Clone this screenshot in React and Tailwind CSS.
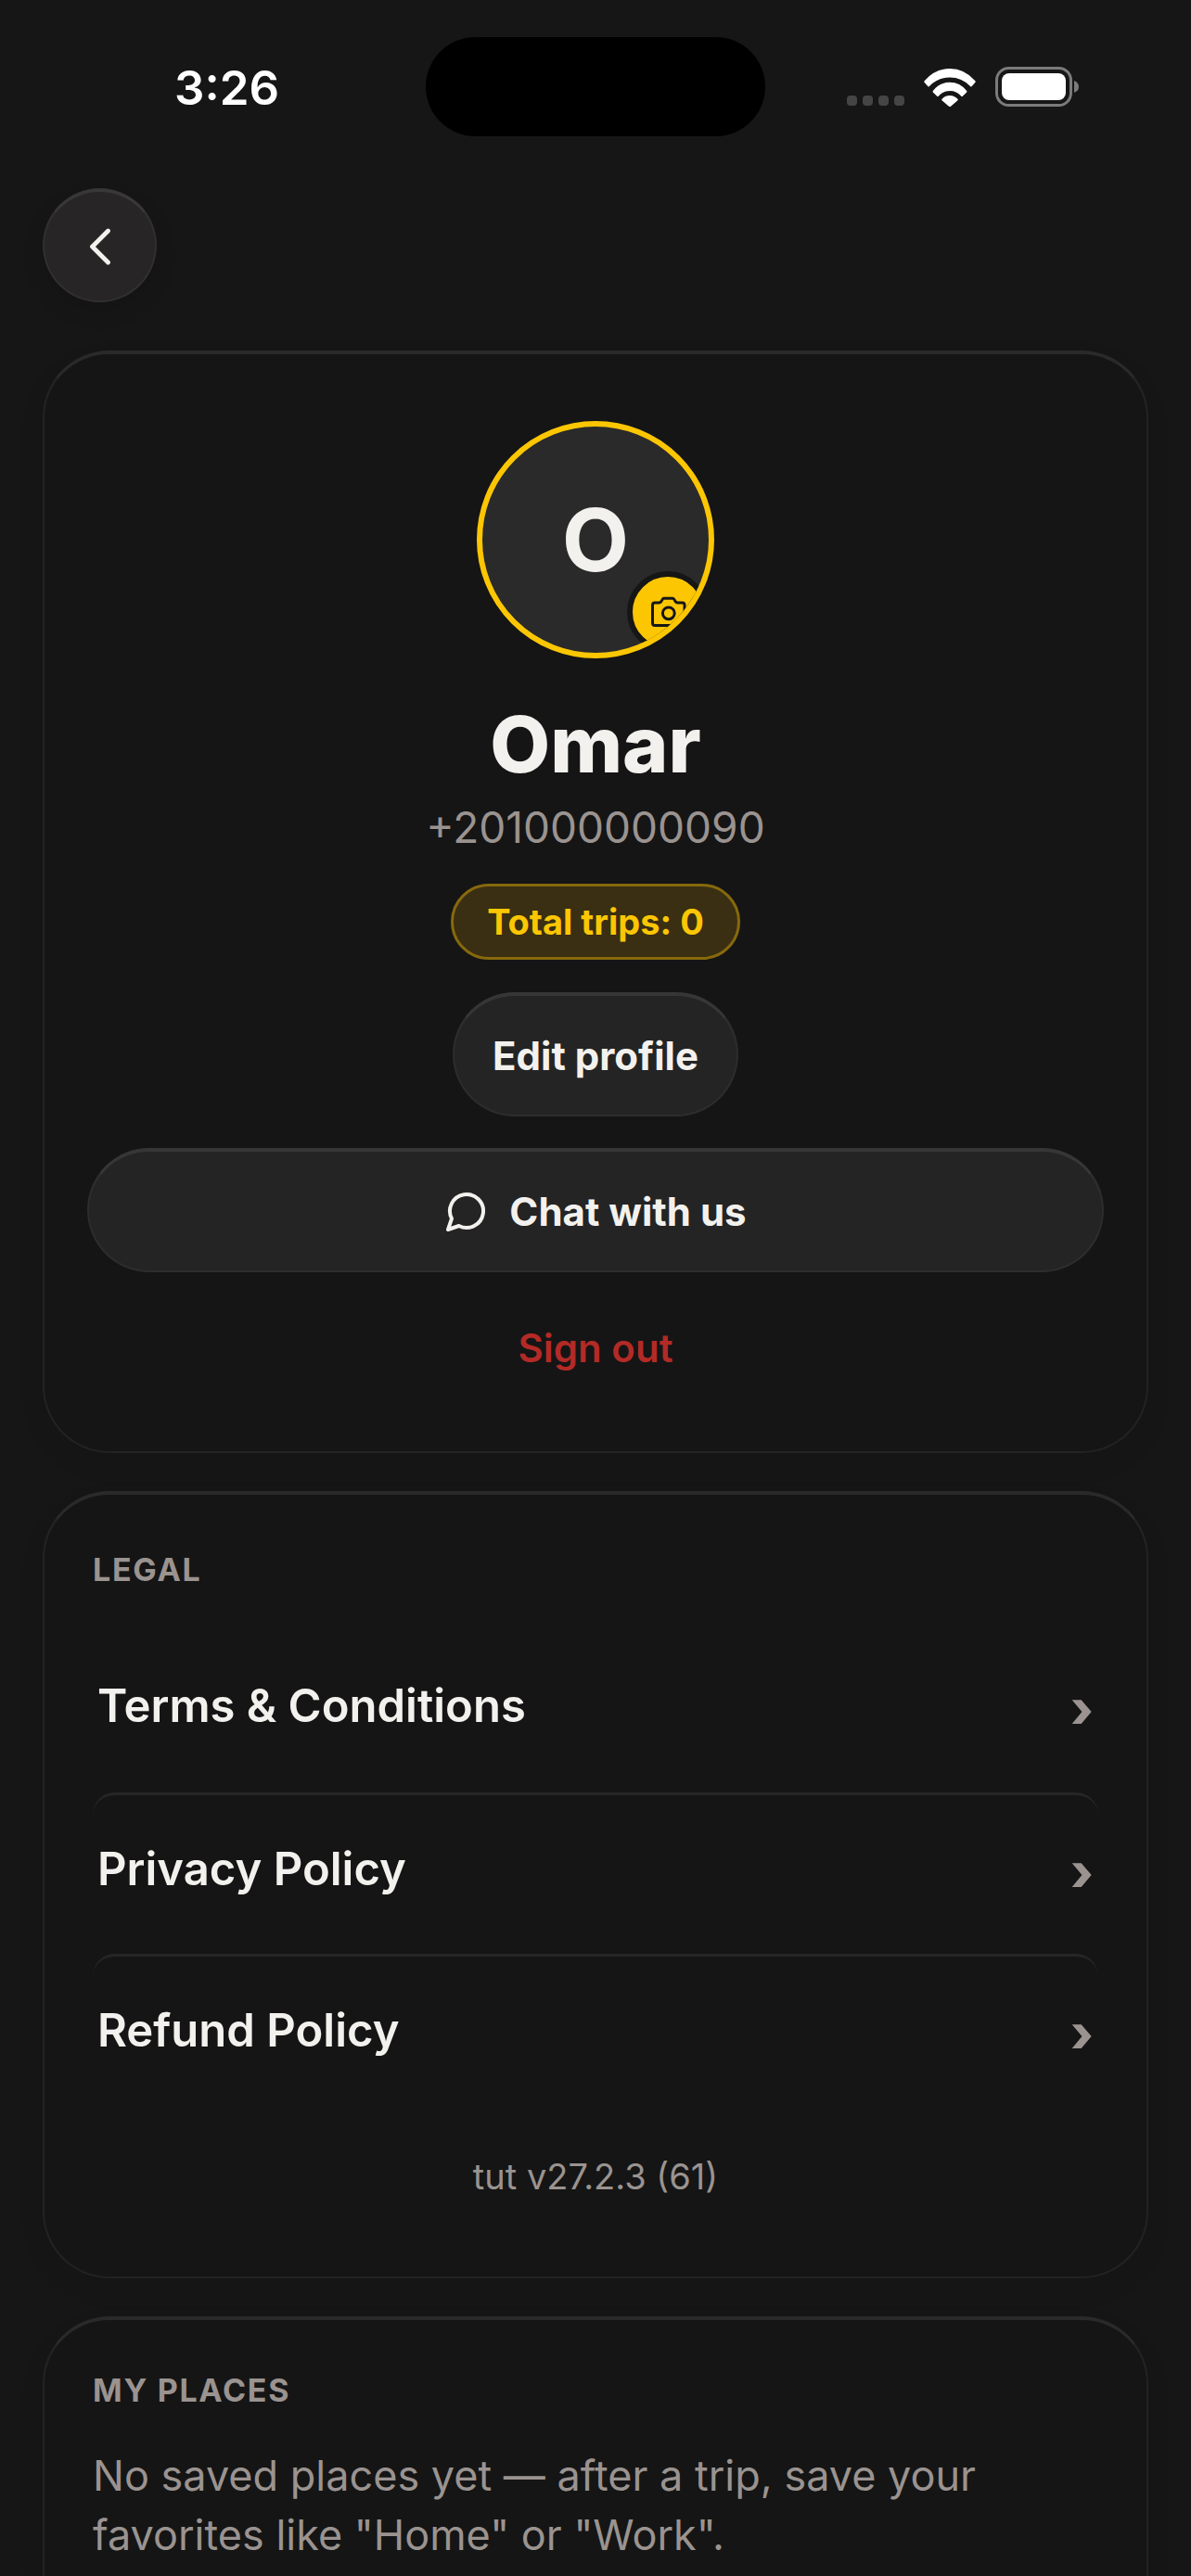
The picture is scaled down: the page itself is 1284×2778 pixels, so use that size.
import React from 'react';

const legalLinks = ['Terms & Conditions', 'Privacy Policy', 'Refund Policy'];

const cardClass = "border-2 border-t-4 border-[#232323] border-t-[#2a2a2a] bg-[#151515] shadow-[0_12px_32px_rgba(0,0,0,0.05)]";
const pillButton = "flex items-center justify-center h-[134px] rounded-full border-2 border-t-4 border-[#2d2d2d] border-t-[#363636] bg-[#242424] text-[42px] font-bold";
const sectionTitle = "text-[34px] leading-[40px] font-bold tracking-wider text-[#9a9390]";

const WifiIcon = () => (
    <svg width="56" height="42" viewBox="0 0 56 42" fill="white" aria-hidden="true">
        <path d="M0.500 15.800Q0 15 .6 14.200Q12 1 28 1T55.400 14.200Q56 15 55.500 15.800L51.500 20.300Q51 20.900 50.300 20.200Q41 10.500 28 10.500T5.700 20.200Q5 20.900 4.500 20.300Z" />
        <path d="M9.800 25Q17 15.800 28 15.800T46.200 25Q46.600 25.800 46.200 26.400L41.500 31Q41 31.400 40.300 30.800Q35.500 25 28 25T15.700 30.800Q15 31.400 14.500 31L9.800 26.400Q9.400 25.800 9.800 25Z" />
        <path d="M19.500 33.800Q23 30 28 30T36.500 33.800Q37 34.600 36.500 35.200L29 41.700Q28 42.400 27 41.700L19.500 35.200Q19 34.600 19.500 33.800Z" />
    </svg>
);

const BatteryIcon = () => (
    <svg width="91" height="44" viewBox="0 0 91 44" aria-hidden="true">
        <rect x="1.500" y="1.500" width="80" height="40" rx="13" fill="none" stroke="#7b7b7b" strokeWidth="3" />
        <rect x="7" y="7" width="69" height="29" rx="8" fill="white" />
        <path d="M85 15Q90 17 90 21.500T85 28Z" fill="#7b7b7b" />
    </svg>
);

const CameraIcon = () => (
    <svg width="44" height="44" viewBox="0 0 44 44" fill="none" stroke="#161616" strokeWidth="3" strokeLinejoin="round" aria-hidden="true">
        <path d="M8 36.500Q5.500 36.500 5.500 34V14.500Q5.500 12 8 12H12.500Q14 12 14.700 10.800L16.500 8Q17 7.200 18 7.200H27Q28 7.200 28.500 8L30.300 10.800Q31 12 32.500 12H37.500Q40 12 40 14.500V34Q40 36.500 37.500 36.500Z" />
        <circle cx="22.800" cy="23.300" r="6.400" />
    </svg>
);

const ChatIcon = () => (
    <svg width="48" height="48" viewBox="0 0 24 24" fill="none" stroke="currentColor" strokeWidth="2" strokeLinecap="round" strokeLinejoin="round" aria-hidden="true">
        <path d="M7.900 20A9 9 0 1 0 4 16.100L2 22Z" />
    </svg>
);

const StatusBar = () => (
    <div className="grid grid-cols-[1fr_auto_1fr] items-center pt-10">
        <span className="justify-self-center pt-[2px] pl-[30px] text-[51px] leading-none font-semibold text-white">3:26</span>
        <div className="w-[366px] h-[107px] rounded-full bg-black" />
        <div className="flex items-center justify-self-center gap-[21px] pr-8">
            <div className="flex gap-[6px] pt-[30px]">
                {[0, 1, 2, 3].map((dot) => (
                    <span key={dot} className="w-[11px] h-[11px] rounded-[4px] bg-[#454545]" />
                ))}
            </div>
            <WifiIcon />
            <BatteryIcon />
        </div>
    </div>
);

const ProfileCard = () => (
    <section className={`${cardClass} flex flex-col items-center rounded-[72px] px-[46px] pt-[72px] pb-16`}>
        <button type="button" aria-label="Change photo" className="relative flex items-center justify-center w-64 h-64 rounded-full border-6 border-[#fcc603] bg-[#2a2a2a] overflow-hidden">
            <span className="text-[94px] leading-none font-bold">O</span>
            <span className="absolute right-0 bottom-0 flex items-center justify-center w-[88px] h-[88px] rounded-full border-6 border-[#161616] bg-[#fcc603]">
                <CameraIcon />
            </span>
        </button>
        <h1 className="mt-12 text-[84px] leading-[90px] font-extrabold">Omar</h1>
        <p className="mt-4 text-[46px] leading-[56px] text-[#9a9390]">+201000000090</p>
        <span className="flex items-center h-[82px] mt-[33px] px-9 rounded-full border-3 border-[#86690c] bg-[#3a2f13] text-[38px] font-bold text-[#fcc603]">Total trips: 0</span>
        <button type="button" className={`${pillButton} mt-[35px] px-[41px]`}>Edit profile</button>
        <button type="button" className={`${pillButton} mt-[34px] w-full gap-[22px]`}>
            <ChatIcon />
            Chat with us
        </button>
        <button type="button" className="mt-[33px] h-24 px-10 text-[42px] font-semibold text-[#b32a26]">Sign out</button>
    </section>
);

const LegalCard = () => (
    <section className={`${cardClass} rounded-[72px] px-[52px] pt-[61px] pb-20`}>
        <h2 className={sectionTitle}>LEGAL</h2>
        <nav className="flex flex-col gap-3 mt-[46px]">
            {legalLinks.map((label, index) => (
                <a key={label} href="#" className={`flex items-center justify-between h-[162px] rounded-3xl px-[5px] ${index > 0 ? "border-t-3 border-[#262626]" : ""}`}>
                    <span className="text-[49px] font-semibold">{label}</span>
                    <span className="pt-[6px] text-[56px] leading-none font-extrabold text-[#9a9390]">›</span>
                </a>
            ))}
        </nav>
        <p className="mt-[50px] text-center text-[38px] leading-[56px] text-[#9a9390]">tut v27.2.3 (61)</p>
    </section>
);

const PlacesCard = () => (
    <section className={`${cardClass} flex-1 rounded-t-[72px] border-b-0 px-[52px] pt-[56px]`}>
        <h2 className={sectionTitle}>MY PLACES</h2>
        <p className="mt-10 max-w-[1020px] text-[45px] leading-[64px] text-[#9a9390]">
            No saved places yet — after a trip, save your favorites like "Home" or "Work".
        </p>
    </section>
);

const App = () => (
    <div className="flex flex-col min-h-screen bg-[#161616] text-[#f3f1ed] font-['Inter',sans-serif]">
        <StatusBar />
        <main className="flex flex-col flex-1 px-[46px] pt-14">
            <button type="button" aria-label="Back" className="flex items-center justify-center w-[123px] h-[123px] rounded-full border-2 border-t-4 border-[#313030] border-t-[#383838] bg-[#272525] shadow-[0_10px_24px_rgba(0,0,0,0.1)]">
                <svg width="68" height="68" viewBox="0 0 24 24" fill="none" stroke="currentColor" strokeWidth="1.700" strokeLinecap="round" strokeLinejoin="round" aria-hidden="true">
                    <path d="m15 18-6-6 6-6" />
                </svg>
            </button>
            <div className="flex flex-col flex-1 gap-[41px] mt-[52px]">
                <ProfileCard />
                <LegalCard />
                <PlacesCard />
            </div>
        </main>
    </div>
);

export default App;
